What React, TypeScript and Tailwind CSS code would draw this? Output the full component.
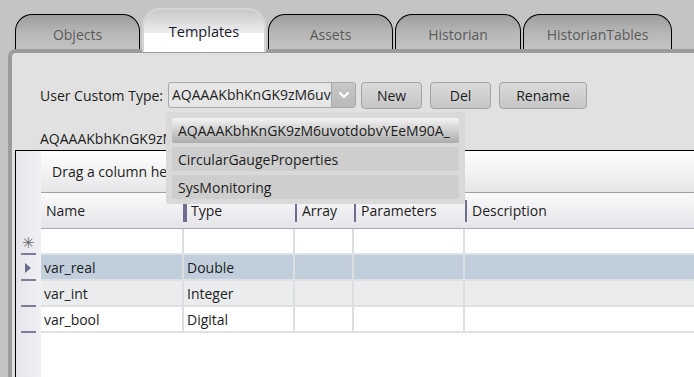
import React from 'react';
import { ChevronDown } from 'lucide-react';

const tabs = [
  { label: 'Objects', w: 'w-[125px]' },
  { label: 'Templates', w: 'w-[124px]', active: true },
  { label: 'Assets', w: 'w-[125px]' },
  { label: 'Historian', w: 'w-[126px]' },
  { label: 'HistorianTables', w: 'w-[149px]' },
];

const rows = [
  { name: 'var_real', type: 'Double', bg: 'bg-[#c1cfdc]' },
  { name: 'var_int', type: 'Integer', bg: 'bg-[#ebecee]' },
  { name: 'var_bool', type: 'Digital', bg: 'bg-white' },
];

function Tab({ label, w, active }: { label: string; w: string; active?: boolean }) {
  if (active) {
    return (
      <div
        className={`${w} relative z-10 -mb-[3px] h-[44px] rounded-t-[18px] border-2 border-b-0 border-[#d4d4d4] bg-[linear-gradient(#c9c9c9,#eeeeee_55%,#ffffff_56%,#ffffff)] flex justify-center pt-[11px] text-[14.5px] text-[#1c1a30]`}
      >
        {label}
      </div>
    );
  }
  return (
    <div
      className={`${w} h-[35px] rounded-t-[17px] border border-b-0 border-black bg-[linear-gradient(#9d9d9d,#b6b6b6_50%,#c3c3c3)] flex justify-center pt-[9px] text-[14px] text-[#5a5a5a]`}
    >
      {label}
    </div>
  );
}

function Button({ children, w }: { children: React.ReactNode; w: string }) {
  return (
    <div
      className={`${w} h-[27px] rounded-[4px] border border-[#a3a3a3] bg-[linear-gradient(#dadada,#c6c6c6)] flex items-center justify-center text-[14px] text-[#1d1d1d]`}
    >
      {children}
    </div>
  );
}

export default function App() {
  return (
    <div
      className="relative w-[694px] h-[377px] overflow-hidden bg-[#c4c4c4] flex flex-col"
      style={{ fontFamily: '"Open Sans", "Noto Sans", sans-serif' }}
    >
      {/* Tab strip */}
      <div className="h-[49px] flex items-end pl-[15px] gap-[2px] shrink-0">
        {tabs.map((t) => (
          <Tab key={t.label} {...t} />
        ))}
      </div>

      {/* Panel */}
      <div className="ml-[8px] flex-1 flex flex-col rounded-tl-[8px] border-l-[4px] border-t-[4px] border-[#9c9c9c] bg-[#e1e1e1] min-h-0">
        <div className="mt-[29px] ml-[28px] flex items-center h-[26px] text-[14px] text-[#1d1d1d]">
          <span className="mr-[5px]">User Custom Type:</span>
          <div className="flex h-[26px] w-[188px] rounded-[3px] border border-[#a8a8a8] bg-[#e6e6e6]">
            <div className="flex-1 overflow-hidden whitespace-nowrap pl-[3px] leading-[24px]">AQAAAKbhKnGK9zM6uvotdobvYEeM90A_</div>
            <div className="w-[24px] border-l border-[#a8a8a8] bg-[linear-gradient(#c8c8c8,#b8b8b8)] flex items-center justify-center rounded-r-[3px]">
              <ChevronDown size={16} strokeWidth={3.5} color="#ffffff" />
            </div>
          </div>
          <div className="ml-[5px] flex gap-[8px]">
            <Button w="w-[61px]">New</Button>
            <Button w="w-[61px]">Del</Button>
            <Button w="w-[88px]">Rename</Button>
          </div>
        </div>

        <div className="ml-[28px] mt-[21px] h-[20px] leading-[20px] text-[14px] text-[#1d1d1d] whitespace-nowrap">
          AQAAAKbhKnGK9zM6uvotdobvYEeM90A_
        </div>

        {/* Grid */}
        <div className="ml-[3px] mt-[1px] flex-1 flex border-l border-t border-black bg-white text-[14px] text-[#1d1d1d] min-h-0">
          {/* Row header strip */}
          <div className="w-[25px] shrink-0 bg-[linear-gradient(90deg,#e4e4ea,#f1f1f5)] flex flex-col">
            <div className="h-[78px]" />
            <div className="h-[26px] flex items-center justify-center text-[#6a6a70] text-[15px]">✳</div>
            {[0, 1, 2, 3].map((i) => (
              <div key={i} className="h-[26px] relative">
                <div className="absolute top-[-2px] left-[5px] w-[15px] h-[2px] bg-[#7c7c9c]" />
                {i === 0 && (
                  <div className="absolute top-[8px] left-[9px] w-0 h-0 border-y-[5px] border-y-transparent border-l-[6px] border-l-[#6a6a90]" />
                )}
              </div>
            ))}
          </div>

          <div className="flex-1 flex flex-col min-w-0">
            {/* Group panel */}
            <div className="h-[42px] shrink-0 border-b border-[#a0a0a0] bg-[linear-gradient(#ffffff,#e6e6e8)] flex items-center pl-[11px] whitespace-nowrap">
              Drag a column header here to group by that column
            </div>

            {/* Column headers */}
            <div className="h-[36px] shrink-0 flex border-b border-[#a7aab2] bg-[linear-gradient(#fafafa,#e4e4ea)] items-center whitespace-nowrap">
              <div className="w-[142px] pl-[5px]">Name</div>
              <div className="w-[4px] h-[22px] border-x-2 border-[#6e6e90] mr-[4px]" />
              <div className="w-[104px]">Type</div>
              <div className="w-[2px] h-[22px] bg-[#6e6e90] mr-[5px]" />
              <div className="w-[52px]">Array</div>
              <div className="w-[2px] h-[22px] bg-[#6e6e90] mr-[5px]" />
              <div className="w-[104px]">Parameters</div>
              <div className="w-[2px] h-[22px] bg-[#6e6e90] mr-[5px]" />
              <div>Description</div>
            </div>

            {/* New row */}
            <div className="h-[26px] flex border-b-2 border-[#dfe1e4] bg-white">
              <div className="w-[143px] border-r-2 border-[#dcdfe2]" />
              <div className="w-[111px] border-r-2 border-[#dcdfe2]" />
              <div className="w-[59px] border-r-2 border-[#dcdfe2]" />
              <div className="w-[111px] border-r-2 border-[#dcdfe2]" />
              <div className="flex-1" />
            </div>

            {rows.map((r) => (
              <div key={r.name} className={`h-[26px] flex border-b-2 border-[#dfe1e4] ${r.bg} items-stretch`}>
                <div className="w-[143px] border-r-2 border-[#dcdfe2] pl-[3px] flex items-center">{r.name}</div>
                <div className="w-[111px] border-r-2 border-[#dcdfe2] pl-[3px] flex items-center">{r.type}</div>
                <div className="w-[59px] border-r-2 border-[#dcdfe2]" />
                <div className="w-[111px] border-r-2 border-[#dcdfe2]" />
                <div className="flex-1" />
              </div>
            ))}
          </div>
        </div>
      </div>

      {/* Open drop-down of the combo box */}
      <div className="absolute left-[166px] top-[112px] w-[299px] h-[92px] z-20 rounded-[3px] bg-[#d9d9d9] pl-[6px] pt-[6px] flex flex-col gap-[4px] text-[14px] text-[#1d1d1d]">
        <div className="w-[287px] h-[25px] rounded-[2px] bg-[linear-gradient(#f4f4f4,#c8c8c8_60%,#acacac)] flex items-center pl-[6px] whitespace-nowrap overflow-hidden">
          AQAAAKbhKnGK9zM6uvotdobvYEeM90A_
        </div>
        <div className="w-[287px] h-[24px] rounded-[2px] bg-[#cecece] flex items-center pl-[6px]">CircularGaugeProperties</div>
        <div className="w-[287px] h-[24px] rounded-[2px] bg-[#cecece] flex items-center pl-[6px]">SysMonitoring</div>
      </div>
    </div>
  );
}
